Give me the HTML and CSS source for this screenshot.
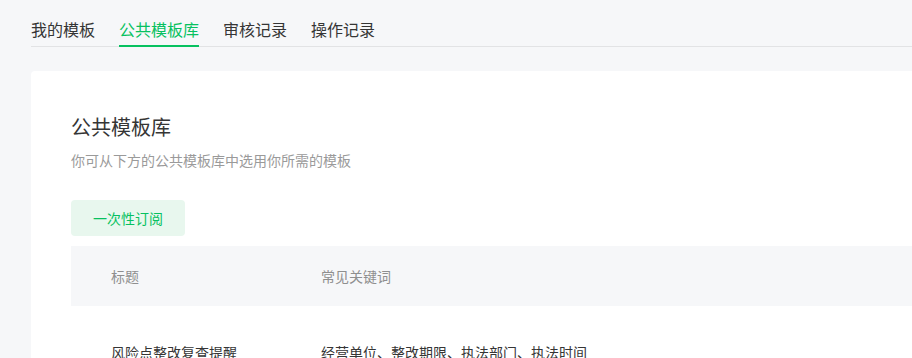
FILE: index.html
```html
<!DOCTYPE html>
<html lang="zh-CN">
<head>
<meta charset="utf-8">
<title>公共模板库</title>
<link rel="stylesheet" href="styles.css">
</head>
<body>
<div class="page">
  <nav class="tabs">
    <a class="tab">我的模板</a>
    <a class="tab active">公共模板库</a>
    <a class="tab">审核记录</a>
    <a class="tab">操作记录</a>
  </nav>
  <section class="card">
    <h1 class="title">公共模板库</h1>
    <p class="desc">你可从下方的公共模板库中选用你所需的模板</p>
    <button class="btn">一次性订阅</button>
    <div class="table">
      <div class="thead">
        <div class="cell col1">标题</div>
        <div class="cell col2">常见关键词</div>
      </div>
      <div class="row">
        <div class="cell col1">风险点整改复查提醒</div>
        <div class="cell col2">经营单位、整改期限、执法部门、执法时间</div>
      </div>
    </div>
  </section>
</div>
</body>
</html>
```

FILE: styles.css
```css
html, body {
  margin: 0;
  padding: 0;
  overflow: hidden;
  background: #f6f7f9;
}
body {
  font-family: "Noto Sans CJK SC", "Noto Sans", sans-serif;
  color: #353535;
}
.page {
  width: 1240px;
  padding: 17px 0 0 31px;
}
.tabs {
  display: flex;
  gap: 24px;
  border-bottom: 1px solid #e2e3e5;
}
.tab {
  font-size: 16px;
  line-height: 24px;
  padding-bottom: 4px;
  border-bottom: 2px solid transparent;
  margin-bottom: -1px;
  color: #353535;
  cursor: pointer;
}
.tab.active {
  color: #07c160;
  border-bottom-color: #07c160;
}
.card {
  margin-top: 24px;
  background: #fff;
  border-radius: 4px 0 0 0;
  padding: 42px 0 0 40px;
  min-height: 400px;
}
.title {
  margin: 0;
  font-size: 20px;
  line-height: 28px;
  font-weight: 400;
  color: #353535;
}
.desc {
  margin: 9px 0 0;
  font-size: 14px;
  line-height: 20px;
  color: #9a9a9a;
}
.btn {
  display: block;
  margin-top: 30px;
  width: 114px;
  height: 36px;
  border: 0;
  border-radius: 4px;
  background: #e8f7ee;
  color: #07c160;
  font-family: inherit;
  font-size: 14px;
  padding: 0;
  cursor: pointer;
}
.table {
  margin-top: 10px;
}
.thead, .row {
  display: grid;
  grid-template-columns: 210px 1fr;
}
.thead {
  background: #f6f7f9;
  height: 60px;
  align-items: center;
  color: #8f8f8f;
}
.row {
  padding-top: 36px;
  color: #353535;
}
.cell {
  font-size: 14px;
  line-height: 20px;
  padding-left: 40px;
}
```
